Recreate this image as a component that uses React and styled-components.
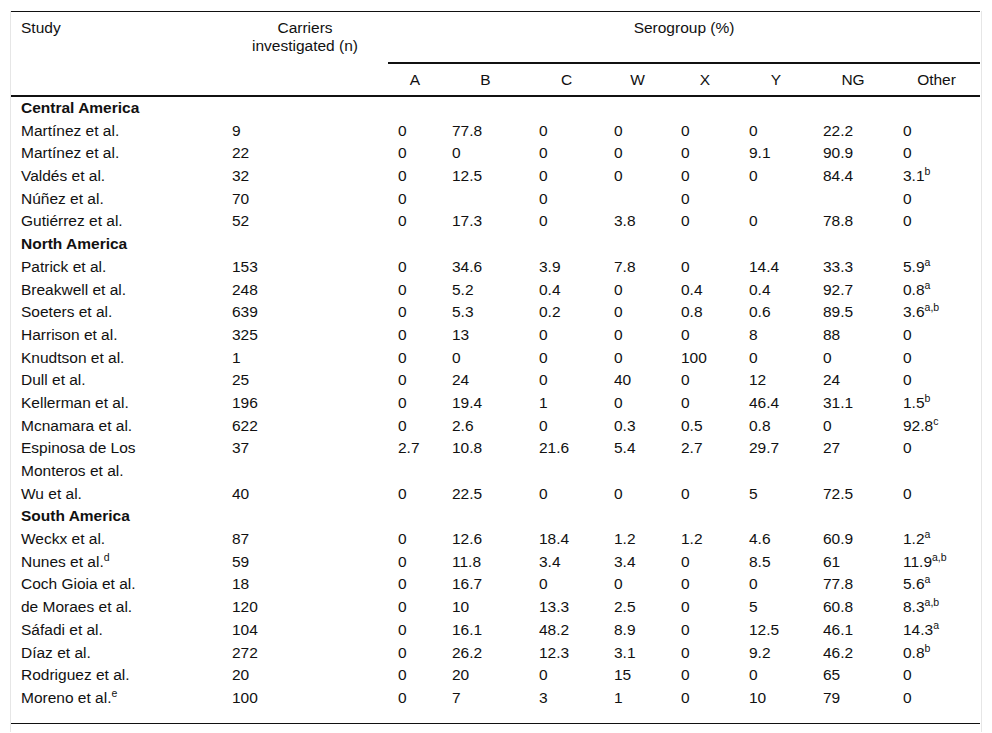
import React from "react";
import styled, { createGlobalStyle } from "styled-components";

const Global = createGlobalStyle`
  html, body { margin: 0; padding: 0; background: #fff; }
  body { font-family: "Liberation Sans", Arial, sans-serif; color: #111; }
`;

const Frame = styled.div`
  margin: 11px 0 0 10px;
  width: 970px;
  border-left: 1px solid #e6e6e6;
  border-right: 1px solid #e6e6e6;
  padding-bottom: 8px;
`;

const Table = styled.table`
  width: 969px;
  table-layout: fixed;
  border-collapse: collapse;
  font-size: 15.5px;
  border-top: 1px solid #111;
  border-bottom: 1px solid #111;
`;

const Head = styled.thead`
  border-bottom: 2px solid #111;
`;

const Th = styled.th`
  font-weight: normal;
  line-height: normal;
  vertical-align: top;
  text-align: ${(p) => (p.$left ? "left" : "center")};
  padding: ${(p) => (p.$sub ? "7px 4px 6px" : "7px 10px 25px")};
  border-bottom: ${(p) => (p.$group ? "2px solid #111" : "none")};
`;

const Td = styled.td`
  line-height: 22.68px;
  vertical-align: top;
  text-align: left;
  padding: 0 ${(p) => (p.$wide ? "24px" : "4px")} ${(p) => (p.$last ? "13px" : "0")} 10px;
  font-weight: ${(p) => (p.$bold ? "bold" : "normal")};
`;

const Sup = styled.sup`
  font-size: 10.5px;
  line-height: 0;
  vertical-align: 6px;
`;

const widths = [211, 166, 54, 87, 75, 67, 68, 74, 80, 87];
const sero = ["A", "B", "C", "W", "X", "Y", "NG", "Other"];

const groups = [
  {
    name: "Central America",
    rows: [
      ["Martínez et al.", "9", "0", "77.8", "0", "0", "0", "0", "22.2", "0"],
      ["Martínez et al.", "22", "0", "0", "0", "0", "0", "9.1", "90.9", "0"],
      ["Valdés et al.", "32", "0", "12.5", "0", "0", "0", "0", "84.4", ["3.1", "b"]],
      ["Núñez et al.", "70", "0", "", "0", "", "0", "", "", "0"],
      ["Gutiérrez et al.", "52", "0", "17.3", "0", "3.8", "0", "0", "78.8", "0"],
    ],
  },
  {
    name: "North America",
    rows: [
      ["Patrick et al.", "153", "0", "34.6", "3.9", "7.8", "0", "14.4", "33.3", ["5.9", "a"]],
      ["Breakwell et al.", "248", "0", "5.2", "0.4", "0", "0.4", "0.4", "92.7", ["0.8", "a"]],
      ["Soeters et al.", "639", "0", "5.3", "0.2", "0", "0.8", "0.6", "89.5", ["3.6", "a,b"]],
      ["Harrison et al.", "325", "0", "13", "0", "0", "0", "8", "88", "0"],
      ["Knudtson et al.", "1", "0", "0", "0", "0", "100", "0", "0", "0"],
      ["Dull et al.", "25", "0", "24", "0", "40", "0", "12", "24", "0"],
      ["Kellerman et al.", "196", "0", "19.4", "1", "0", "0", "46.4", "31.1", ["1.5", "b"]],
      ["Mcnamara et al.", "622", "0", "2.6", "0", "0.3", "0.5", "0.8", "0", ["92.8", "c"]],
      ["Espinosa de Los Monteros et al.", "37", "2.7", "10.8", "21.6", "5.4", "2.7", "29.7", "27", "0"],
      ["Wu et al.", "40", "0", "22.5", "0", "0", "0", "5", "72.5", "0"],
    ],
  },
  {
    name: "South America",
    rows: [
      ["Weckx et al.", "87", "0", "12.6", "18.4", "1.2", "1.2", "4.6", "60.9", ["1.2", "a"]],
      [["Nunes et al.", "d"], "59", "0", "11.8", "3.4", "3.4", "0", "8.5", "61", ["11.9", "a,b"]],
      ["Coch Gioia et al.", "18", "0", "16.7", "0", "0", "0", "0", "77.8", ["5.6", "a"]],
      ["de Moraes et al.", "120", "0", "10", "13.3", "2.5", "0", "5", "60.8", ["8.3", "a,b"]],
      ["Sáfadi et al.", "104", "0", "16.1", "48.2", "8.9", "0", "12.5", "46.1", ["14.3", "a"]],
      ["Díaz et al.", "272", "0", "26.2", "12.3", "3.1", "0", "9.2", "46.2", ["0.8", "b"]],
      ["Rodriguez et al.", "20", "0", "20", "0", "15", "0", "0", "65", "0"],
      [["Moreno et al.", "e"], "100", "0", "7", "3", "1", "0", "10", "79", "0"],
    ],
  },
];

const Cell = ({ v }) =>
  Array.isArray(v) ? (
    <>
      {v[0]}
      <Sup>{v[1]}</Sup>
    </>
  ) : (
    v
  );

export default function App() {
  const lastGroup = groups.length - 1;
  return (
    <>
      <Global />
      <Frame>
        <Table>
          <colgroup>
            {widths.map((w, i) => (
              <col key={i} style={{ width: w }} />
            ))}
          </colgroup>
          <Head>
            <tr>
              <Th $left rowSpan={2}>Study</Th>
              <Th rowSpan={2}>
                Carriers
                <br />
                investigated (n)
              </Th>
              <Th colSpan={8} $group>
                Serogroup (%)
              </Th>
            </tr>
            <tr>
              {sero.map((s) => (
                <Th key={s} $sub>
                  {s}
                </Th>
              ))}
            </tr>
          </Head>
          <tbody>
            {groups.map((g, gi) => (
              <React.Fragment key={g.name}>
                <tr>
                  <Td $bold colSpan={10}>
                    {g.name}
                  </Td>
                </tr>
                {g.rows.map((r, ri) => {
                  const last = gi === lastGroup && ri === g.rows.length - 1;
                  return (
                    <tr key={ri}>
                      {r.map((v, ci) => (
                        <Td key={ci} $wide={ci === 0} $last={last}>
                          <Cell v={v} />
                        </Td>
                      ))}
                    </tr>
                  );
                })}
              </React.Fragment>
            ))}
          </tbody>
        </Table>
      </Frame>
    </>
  );
}
